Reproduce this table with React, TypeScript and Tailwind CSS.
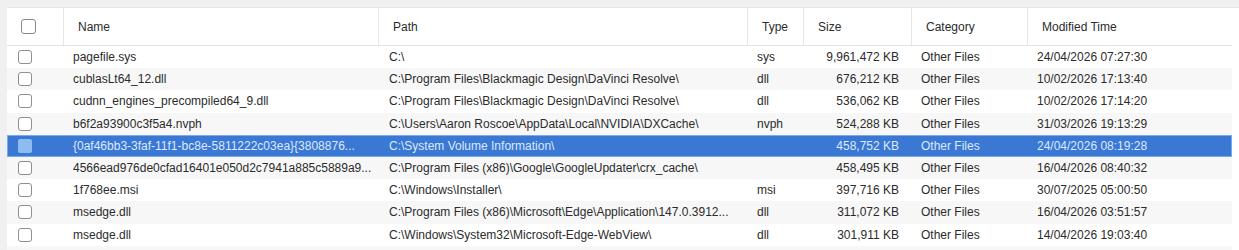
import React from "react";

type FileRow = {
  name: string;
  path: string;
  type: string;
  size: string;
  category: string;
  modified: string;
};

const rows: FileRow[] = [
  { name: "pagefile.sys", path: "C:\\", type: "sys", size: "9,961,472 KB", category: "Other Files", modified: "24/04/2026 07:27:30" },
  { name: "cublasLt64_12.dll", path: "C:\\Program Files\\Blackmagic Design\\DaVinci Resolve\\", type: "dll", size: "676,212 KB", category: "Other Files", modified: "10/02/2026 17:13:40" },
  { name: "cudnn_engines_precompiled64_9.dll", path: "C:\\Program Files\\Blackmagic Design\\DaVinci Resolve\\", type: "dll", size: "536,062 KB", category: "Other Files", modified: "10/02/2026 17:14:20" },
  { name: "b6f2a93900c3f5a4.nvph", path: "C:\\Users\\Aaron Roscoe\\AppData\\Local\\NVIDIA\\DXCache\\", type: "nvph", size: "524,288 KB", category: "Other Files", modified: "31/03/2026 19:13:29" },
  { name: "{0af46bb3-3faf-11f1-bc8e-5811222c03ea}{3808876...", path: "C:\\System Volume Information\\", type: "", size: "458,752 KB", category: "Other Files", modified: "24/04/2026 08:19:28" },
  { name: "4566ead976de0cfad16401e050d2c7941a885c5889a9...", path: "C:\\Program Files (x86)\\Google\\GoogleUpdater\\crx_cache\\", type: "", size: "458,495 KB", category: "Other Files", modified: "16/04/2026 08:40:32" },
  { name: "1f768ee.msi", path: "C:\\Windows\\Installer\\", type: "msi", size: "397,716 KB", category: "Other Files", modified: "30/07/2025 05:00:50" },
  { name: "msedge.dll", path: "C:\\Program Files (x86)\\Microsoft\\Edge\\Application\\147.0.3912...", type: "dll", size: "311,072 KB", category: "Other Files", modified: "16/04/2026 03:51:57" },
  { name: "msedge.dll", path: "C:\\Windows\\System32\\Microsoft-Edge-WebView\\", type: "dll", size: "301,911 KB", category: "Other Files", modified: "14/04/2026 19:03:40" },
  { name: "", path: "", type: "", size: "", category: "", modified: "" },
];

const selectedIndex = 4;

const cols = "grid grid-cols-[56px_315px_369px_56px_108px_116px_205px]";

export default function App() {
  return (
    <div
      className="h-[250px] w-[1239px] overflow-hidden bg-[#f0f0f0] pt-[7px] pl-[7px] text-[12px] text-[#2b2b2b]"
      style={{ fontFamily: '"Liberation Sans", Arial, sans-serif' }}
    >
      <div className="h-full border-t border-[#e6e6e6] bg-white">
        {/* header */}
        <div className={`${cols} h-[38px] w-[1225px] border-b border-[#e3e3e3]`}>
          <div className="flex items-center pl-[14px]">
            <span className="h-[15px] w-[15px] rounded-[3px] border border-[#8a8a8a] bg-white" />
          </div>
          {["Name", "Path", "Type", "Size", "Category", "Modified Time"].map((h) => (
            <div key={h} className="flex items-center border-l border-[#e6e6e6] pl-[14px]">
              {h}
            </div>
          ))}
        </div>

        {/* rows */}
        {rows.map((r, i) => {
          const selected = i === selectedIndex;
          const stripe = i % 2 === 1;
          return (
            <div
              key={i}
              className={`${cols} h-[22.2px] w-[1225px] items-center ${
                selected
                  ? "bg-[#3a78d4] text-[#dce9ff] outline outline-1 -outline-offset-1 outline-[#79aaf0]"
                  : stripe
                  ? "bg-[#f7f7f7]"
                  : "bg-white"
              }`}
            >
              <div className="flex items-center pl-[11px]">
                {r.name &&
                  (selected ? (
                    <span className="h-[14px] w-[14px] rounded-[2px] bg-[#8cbcf0]" />
                  ) : (
                    <span className="h-[14px] w-[14px] rounded-[3px] border border-[#8f8f8f] bg-white" />
                  ))}
              </div>
              <div className="overflow-hidden whitespace-nowrap pl-[10px]">{r.name}</div>
              <div className="overflow-hidden whitespace-nowrap pl-[11px]">{r.path}</div>
              <div className="pl-[10px]">{r.type}</div>
              <div className="pr-[12px] text-right">{r.size}</div>
              <div className="pl-[10px]">{r.category}</div>
              <div className="pl-[10px]">{r.modified}</div>
            </div>
          );
        })}
      </div>
    </div>
  );
}
